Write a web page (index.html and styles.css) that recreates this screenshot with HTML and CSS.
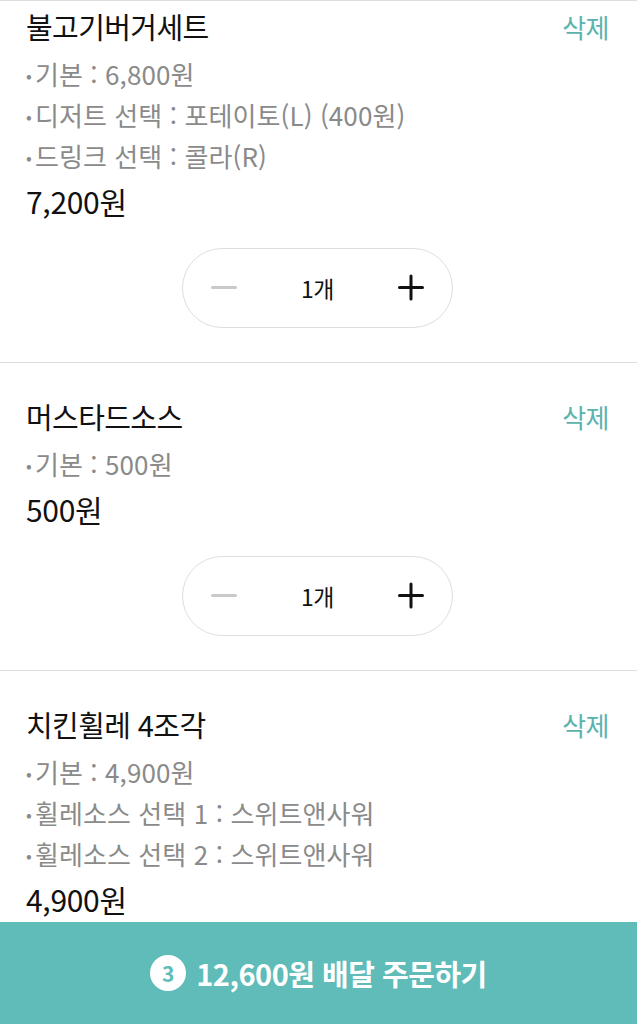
FILE: index.html
```html
<!DOCTYPE html>
<html lang="ko">
<head>
    <meta charset="UTF-8">
    <meta name="viewport" content="width=device-width, initial-scale=1.0">
    <title>장바구니</title>
    <link rel="stylesheet" href="styles.css">
</head>
<body>
    <div class="cart">
        <div class="cart-item first">
            <div class="item-head">
                <span class="item-name">불고기버거세트</span>
                <span class="item-delete">삭제</span>
            </div>
            <ul class="item-options">
                <li>기본 : 6,800원</li>
                <li>디저트 선택 : 포테이토(L) (400원)</li>
                <li>드링크 선택 : 콜라(R)</li>
            </ul>
            <div class="item-price">7,200원</div>
            <div class="stepper">
                <span class="step minus"></span>
                <span class="count">1개</span>
                <span class="step plus"></span>
            </div>
        </div>

        <div class="cart-item">
            <div class="item-head">
                <span class="item-name">머스타드소스</span>
                <span class="item-delete">삭제</span>
            </div>
            <ul class="item-options">
                <li>기본 : 500원</li>
            </ul>
            <div class="item-price">500원</div>
            <div class="stepper">
                <span class="step minus"></span>
                <span class="count">1개</span>
                <span class="step plus"></span>
            </div>
        </div>

        <div class="cart-item">
            <div class="item-head">
                <span class="item-name">치킨휠레 4조각</span>
                <span class="item-delete">삭제</span>
            </div>
            <ul class="item-options">
                <li>기본 : 4,900원</li>
                <li>휠레소스 선택 1 : 스위트앤사워</li>
                <li>휠레소스 선택 2 : 스위트앤사워</li>
            </ul>
            <div class="item-price">4,900원</div>
        </div>
    </div>

    <div class="order-bar">
        <span class="order-badge">3</span>
        <span class="order-text">12,600원 배달 주문하기</span>
    </div>
</body>
</html>
```

FILE: styles.css
```css
* {
    margin: 0;
    padding: 0;
    box-sizing: border-box;
    font-family: "Noto Sans CJK KR", "Noto Sans", sans-serif;
}

:root {
    --text: #111;
    --sub: #8a8a8a;
    --line: #dedede;
    --teal: #5fbcb9;
    --teal-text: #5cb3ae;
}

body {
    background: #fff;
    color: var(--text);
    height: 100vh;
    display: flex;
    flex-direction: column;
    overflow: hidden;
}

.cart {
    flex: 1;
    overflow: hidden;
    border-top: 1px solid var(--line);
}

.cart-item {
    padding: 25px 28px 34px 26px;
    border-bottom: 1px solid var(--line);
}

.cart-item.first {
    padding-top: 0;
}

.cart-item.first .item-head {
    margin-top: -3px;
}

.item-head {
    display: flex;
    justify-content: space-between;
    align-items: center;
    height: 56px;
}

.item-name {
    font-size: 29px;
    letter-spacing: -0.6px;
}

.item-delete {
    font-size: 26px;
    color: var(--teal-text);
    letter-spacing: -0.5px;
}

.item-options {
    list-style: none;
}

.item-options li {
    font-size: 26px;
    line-height: 40px;
    color: var(--sub);
    letter-spacing: 0.1px;
}

.item-options li::before {
    content: "•";
    margin-right: 3px;
    font-size: 17px;
    vertical-align: 3px;
}

.item-price {
    font-size: 30px;
    line-height: 48px;
    letter-spacing: -0.3px;
}

.stepper {
    width: 271px;
    height: 80px;
    margin: 23px auto 0;
    border: 1px solid var(--line);
    border-radius: 40px;
    display: flex;
    align-items: center;
    justify-content: space-between;
    padding: 0 28px;
}

.count {
    font-size: 23px;
    letter-spacing: -0.5px;
}

.step {
    position: relative;
    width: 26px;
    height: 26px;
}

.step::before,
.step::after {
    content: "";
    position: absolute;
    left: 0;
    top: 11px;
    width: 26px;
    height: 3px;
    border-radius: 2px;
}

.minus::before {
    background: #c9c9c9;
}

.minus::after {
    display: none;
}

.plus::before,
.plus::after {
    background: #111;
}

.plus::after {
    transform: rotate(90deg);
}

.order-bar {
    flex: none;
    height: 102px;
    background: var(--teal);
    display: flex;
    justify-content: center;
    align-items: center;
    gap: 10px;
    color: #fff;
}

.order-badge {
    width: 36px;
    height: 36px;
    border-radius: 50%;
    background: #fff;
    color: var(--teal);
    font-size: 21px;
    font-weight: 700;
    display: flex;
    justify-content: center;
    align-items: center;
}

.order-text {
    font-size: 29px;
    font-weight: 700;
    letter-spacing: -0.5px;
}
```
